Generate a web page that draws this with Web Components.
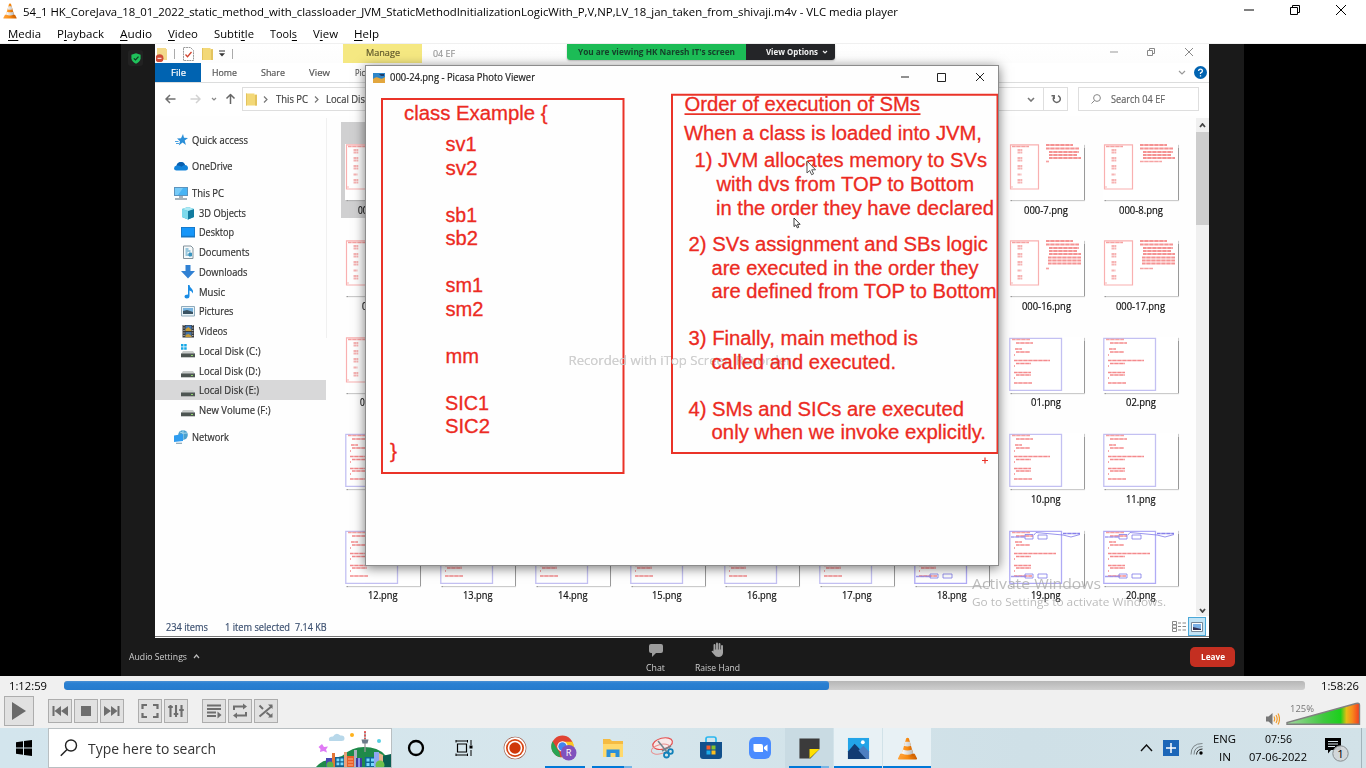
<!DOCTYPE html>
<html lang="en">
<head>
<meta charset="utf-8">
<title>VLC media player</title>
<style>
html,body{margin:0;padding:0;width:1366px;height:768px;overflow:hidden;background:#fff}
</style>
</head>
<body>
<desk-screen></desk-screen>
<script>
const T = (w, s, extra = '') => `<fit-text w="${w}" ${extra}>${s}</fit-text>`;
function define(name, css, html) {
  customElements.define(name, class extends HTMLElement {
    connectedCallback() {
      if (this.shadowRoot) return;
      const root = this.attachShadow({ mode: 'open' });
      root.innerHTML = `<style>*{box-sizing:border-box}svg{display:block;flex:none}${css}</style>` + (typeof html === 'function' ? html(this) : html);
    }
  });
}

/* Text squeezed or stretched to a set advance width */
customElements.define('fit-text', class extends HTMLElement {
  connectedCallback() {
    if (this.shadowRoot) return;
    const w = +this.getAttribute('w');
    const root = this.attachShadow({ mode: 'open' });
    root.innerHTML = `<style>:host{display:block;flex:none;white-space:pre;width:${w}px}span{display:inline-block;transform-origin:0 50%}</style><span><slot></slot></span>`;
    const span = root.querySelector('span');
    const real = span.getBoundingClientRect().width;
    if (real) span.style.transform = `scaleX(${w / real})`;
  }
});

/* ---------- shared drawings ---------- */
const cone = s => `<svg width="${s}" height="${s}" viewBox="0 0 24 24"><defs><linearGradient id="cg" x1="0" x2="1"><stop offset="0" stop-color="#ffa23a"/><stop offset=".5" stop-color="#f88a10"/><stop offset="1" stop-color="#c85a00"/></linearGradient><linearGradient id="cw" x1="0" x2="1"><stop offset="0" stop-color="#fff"/><stop offset="1" stop-color="#b9b9b9"/></linearGradient></defs><path d="M4.5 17.5h15L22 22.4q0 1-1 1H3q-1 0-1-1z" fill="url(#cg)"/><path d="M10.6 1.2Q12 .2 13.4 1.2L18.6 19.5Q12 23 5.4 19.5z" fill="url(#cg)"/><path d="M9.5 5h5l1.2 4.2q-3.7 1.6-7.4 0zM7.2 13q4.8 2 9.6 0l1.2 4.3q-6 2.6-12 0z" fill="url(#cw)"/></svg>`;
const folder = (w, h) => `<svg width="${w}" height="${h}" viewBox="0 0 11 13"><path d="M0 1h8.5v1.2H11V13H0z" fill="#f3d877"/><path d="M0 1h1v12H0zM9 2.2h2V13H9z" fill="#e3c35e"/></svg>`;
const chev = (w, h, c, sw = 1.2) => `<svg width="${w}" height="${h}" viewBox="0 0 ${w} ${h}"><path d="M1 1L${w / 2} ${h - 1}L${w - 1} 1" fill="none" stroke="${c}" stroke-width="${sw}"/></svg>`;
const winCtl = (kind, c, s) => {
  const p = { min: `M0 ${s / 2}H${s}`, max: `M.5 .5H${s - .5}V${s - .5}H.5z`, restore: `M.5 2.5H${s - 2.5}V${s - .5}H.5zM2.5 2.5V.5H${s - .5}V${s - 2.5}H${s - 2.5}`, close: `M0 0L${s} ${s}M${s} 0L0 ${s}` }[kind];
  return `<svg width="${s}" height="${s}" viewBox="0 0 ${s} ${s}"><path d="${p}" fill="none" stroke="${c}" stroke-width="1"/></svg>`;
};

/* ---------- VLC window ---------- */
define('vlc-title', `:host{display:flex;align-items:center;height:24px;padding:0 20px 0 2px;background:#fff;color:#000;font:11.6px/24px "Open Sans","Noto Sans",sans-serif}
.g{flex:1}.c{display:flex;gap:36px;padding-bottom:4px}.i{width:16px;margin-right:5px;padding-bottom:2px}`,
`<div class="i">${cone(16)}</div>${T(875, '54_1 HK_CoreJava_18_01_2022_static_method_with_classloader_JVM_StaticMethodInitializationLogicWith_P,V,NP,LV_18_jan_taken_from_shivaji.m4v - VLC media player')}<div class="g"></div><div class="c">${winCtl('min', '#000', 10)}${winCtl('restore', '#000', 10)}${winCtl('close', '#000', 10)}</div>`);

define('vlc-menu', `:host{display:flex;gap:16px;height:20px;padding-left:8px;background:#fff;border-bottom:1px solid #f0f0f0;color:#000;font:11.6px/20px "Open Sans","Noto Sans",sans-serif}u{text-underline-offset:2px;text-decoration-thickness:1px}`,
[[33, '<u>M</u>edia'], [47, 'P<u>l</u>ayback'], [32, '<u>A</u>udio'], [30, '<u>V</u>ideo'], [40, 'Subti<u>t</u>le'], [27, 'Tool<u>s</u>'], [25, 'V<u>i</u>ew'], [25, '<u>H</u>elp']].map(a => T(...a)).join(''));

/* ---------- Explorer ---------- */
define('explorer-ribbon', `:host{display:grid;grid-template-rows:19px 19px;height:39px;border-bottom:1px solid #dcdddd;background:#fff;color:#555;font:9.8px/17px "Open Sans","Noto Sans",sans-serif}
.r{display:flex;align-items:center}.q{width:188px;display:flex;align-items:center;padding-left:1px}.m{width:79px;height:19px;background:#f5e882;display:flex;justify-content:center;color:#60592c}
.bar{width:1px;height:10px;background:#aaa}.g{flex:1}.top{background:linear-gradient(#fff,#fdfdfd)}.w{display:flex;padding-bottom:3px}.file{width:46px;height:19px;background:#0063b1;color:#fff;display:flex;justify-content:center;line-height:19px}.r2{line-height:19px}`,
`<div class="r top"><div class="q"><svg width="12" height="16" viewBox="0 0 12 16"><path d="M1 2h9v1h1v11H1z" fill="#f3d98a"/><circle cx="3.5" cy="12.3" r="4" fill="#cf4a36"/><path d="M1.5 12.3h4" stroke="#fff"/></svg><div class="bar" style="margin:0 8px 0 6px"></div>
<svg width="11" height="14" viewBox="0 0 11 14"><path d="M.5.5h7l3 3v10H.5z" fill="#fff" stroke="#999" stroke-dasharray="2 .6"/><path d="M2.5 7.5l2 2.2L8.5 5" fill="none" stroke="#d0432e" stroke-width="1.3"/></svg><div style="margin-left:8px">${folder(11, 13)}</div><svg style="margin:0 7px 0 6px" width="6" height="7" viewBox="0 0 6 7"><path d="M0 1h6" stroke="#333"/><path d="M0 3.200h6L3 6.500z" fill="#333"/></svg><div class="bar"></div></div>
<div class="m">${T(34, 'Manage')}</div><div style="width:11px"></div>${T(22, '04 EF', 'style="color:#999"')}<div class="g"></div><div class="w">${winCtl('min', '#999', 8)}<div style="width:29px"></div>${winCtl('restore', '#888', 8)}<div style="width:30px"></div>${winCtl('close', '#888', 8)}</div><div style="width:16px"></div></div>
<div class="r r2"><div class="file">${T(15, 'File')}</div><div style="width:11px"></div>${T(25, 'Home')}<div style="width:24px"></div>${T(24, 'Share')}<div style="width:24px"></div>${T(21, 'View')}<div style="width:25px"></div>${T(10, 'Pic')}<div class="g"></div>${chev(8, 5, '#999')}<svg style="margin:0 2px 0 8px" width="13" height="13" viewBox="0 0 13 13"><circle cx="6.500" cy="6.500" r="6.500" fill="#0063b1"/><path d="M4.600 5Q4.700 3.200 6.500 3.200T8.400 4.900Q8.400 6 6.500 7v1M6.500 9.200v1.300" fill="none" stroke="#fff" stroke-width="1.300"/></svg></div>`);

define('explorer-address', `:host{display:flex;align-items:center;height:33px;background:#fff;color:#444;font:10px/22px "Open Sans","Noto Sans",sans-serif;padding-bottom:1px}
.nav{display:flex;align-items:center;width:87px;padding-left:10px}.box{width:826px;height:24px;border:1px solid #dedede;display:flex;align-items:center;padding-left:3px}.g{flex:1}.ref{border-left:1px solid #dedede;width:24px;height:22px;display:grid;place-items:center}
.s{margin-left:10px;width:121px;height:24px;border:1px solid #dedede;display:flex;align-items:center;padding-left:12px;color:#666}`,
(() => { const ar = (c, r = 0) => `<svg width="11" height="10" viewBox="0 0 11 10" style="transform:rotate(${r}deg)"><path d="M10.500 5H1M5 1L1 5l4 4" fill="none" stroke="${c}" stroke-width="1.500"/></svg>`;
  const gt = `<svg style="margin:0 7.500px 0 6px" width="5" height="7" viewBox="0 0 5 7"><path d="M1 .5L4 3.500L1 6.500" fill="none" stroke="#777" stroke-width="1.200"/></svg>`;
  return `<div class="nav">${ar('#707070')}<div style="width:14px"></div>${ar('#d2d2d2', 180)}<div style="width:10px"></div>${chev(6, 4, '#888')}<div style="width:8px"></div>${ar('#666', 90)}</div>
<div class="box">${folder(11, 14)}${gt}${T(32, 'This PC')}${gt}${T(39, 'Local Dis')}<div class="g"></div>${chev(8, 5, '#777', 1.600)}<div style="width:8px"></div><div class="ref"><svg width="10" height="10" viewBox="0 0 10 10"><path d="M6.500 1.600A3.500 3.500 0 1 1 3 2.200M2.700 5V1.800H0" transform="translate(.500 0)" fill="none" stroke="#666" stroke-width="1.500"/></svg></div></div>
<div class="s"><svg width="10" height="10" viewBox="0 0 10 10"><circle cx="6" cy="4" r="3.400" fill="none" stroke="#888"/><path d="M3.500 6.500L.5 9.500" stroke="#888"/></svg><div style="width:10px"></div>${T(54, 'Search 04 EF')}</div>`; })());

const disk = w => `<path d="M2 7h10l2 3H0z" fill="#c9cccb"/><path d="M0 9.500h14v3.800H0z" fill="#4d5552"/><path d="M10 11.500h2" stroke="#8fd36b"/>${w ? '<path d="M0 0h2.500v2.500H0zM3.200 0h2.500v2.500H3.200zM0 3.200h2.500v2.500H0zM3.200 3.200h2.500v2.500H3.200z" fill="#17a8e6"/>' : ''}`;
const navIcons = {
  star: '<path d="M9 1l1 3.700 4 .3-3.300 2.600 1.200 4.300L8.600 9.500l-3.800 3L6 8.200 3 5.500l4-.3z" fill="#2b8fd8"/><path d="M1 8.500h3.500M2 10.500h3" stroke="#4ba3e2"/>',
  cloud: '<path d="M0 9.500Q0 7 2.500 6.500Q3.500 3 7 3q3 0 4 3 3 .3 3 3.200 0 2.300-2.500 2.300h-9Q0 11.500 0 9.500z" fill="#1283da"/><path d="M2.500 6.500Q3.500 3 7 3q3 0 4 3-2 0-3.500 1.800Q5 6 2.500 6.500z" fill="#0a5fae"/>',
  pc: '<path d="M0 1h14v9H0z" fill="#5c93bd"/><path d="M1 2h12v7H1z" fill="#48b4f4"/><path d="M1 2h8L4 9H1z" fill="#77cbf8"/><path d="M5 11h4M1 13h12" stroke="#8b9aa5" stroke-width="1.300"/>',
  cube: '<path d="M1 3l6-2 6 2v8l-6 2.500L1 11z" fill="#23a6c9"/><path d="M1 3l6 2v8.500L1 11z" fill="#7ddaec"/><path d="M7 5l6-2v8l-6 2.500z" fill="#117b9f"/><path d="M1 3l6-2 6 2-6 2z" fill="#aeeaf4"/>',
  desk: '<path d="M0 2h14v10.500H0z" fill="#1876c2"/><path d="M.8 2.800h12.400v8H.8z" fill="#1696f9"/>',
  doc: '<path d="M2.500 1h7.500l2 2v10.500H2.500z" fill="#f6f9fa" stroke="#83939c"/><path d="M4.500 4h3M4.500 6h5M4.500 8h2M4.500 10h6M8 8h2.500v3H8z" stroke="#3b94bf" fill="#3b94bf"/>',
  down: '<path d="M4.500 0h5v6H14l-7 7.500L0 6h4.500z" fill="#3181d3"/>',
  music: '<path d="M7 0h1.500q.3 2.500 2.500 4 1.700 1.500.8 4.500Q11 6 8.500 5.500V11q0 2.500-2.700 2.500-2.300 0-2.300-1.800Q3.500 9.500 7 9.500z" fill="#1a8ce4"/>',
  pics: '<path d="M.5 2.500h13v9.500H.5z" fill="#e8f3f8" stroke="#8faabb"/><path d="M2 4h10v6H2z" fill="#77b3df"/><path d="M2 10V7l4-1 6 2v2z" fill="#3a5363"/>',
  vids: '<path d="M1.500 1h11.500v12.500H1.500z" fill="#3a3a3a"/><path d="M4.500 1.500h6v5.500h-6z" fill="#3f78ba"/><path d="M4.500 8h6v5h-6z" fill="#4573a4"/><path d="M4.500 5l3-2 3 3v1h-6zM4.500 11l3-1 3 2v1h-6z" fill="#c69a34"/><path d="M3 1v12.500M11.800 1v12.500" stroke="#ddd" stroke-dasharray="1 1.500"/>',
  net: '<circle cx="9" cy="5" r="4.800" fill="#4ba0cd"/><path d="M6 2q3 2 7 1M9 0v9" stroke="#a6daf0" fill="none"/><path d="M0 5.500L9 4v7L0 12z" fill="#2f9df0"/><path d="M2 13.300h6" stroke="#8aa6b6" stroke-width="1.200"/>',
  diskw: disk(1), disk: disk(0)
};
define('nav-item', `:host{display:flex;align-items:center;gap:4px;height:19.750px;padding-left:26px;width:171px}:host([top]){padding-left:19px}:host([gap]){margin-top:6.700px}:host([on]){background:#d8d8d9}`,
el => `<svg width="14" height="14" viewBox="0 0 14 14">${navIcons[el.getAttribute('icon')]}</svg>${T(el.getAttribute('w'), el.getAttribute('label'))}`);

define('explorer-nav', `:host{display:block;width:172px;padding-top:14.100px;color:#333;font:10px/18px "Open Sans","Noto Sans",sans-serif;background:linear-gradient(#f0f0f0,#f0f0f0) right 2px/1px 220px no-repeat}`,
[['star', 56, 'Quick access', 'top'], ['cloud', 40.5, 'OneDrive', 'top gap'], ['pc', 32, 'This PC', 'top gap'], ['cube', 47, '3D Objects'], ['desk', 35, 'Desktop'], ['doc', 50.5, 'Documents'], ['down', 48.5, 'Downloads'], ['music', 26, 'Music'], ['pics', 34.5, 'Pictures'], ['vids', 28.5, 'Videos'], ['diskw', 61.5, 'Local Disk (C:)'], ['disk', 61.5, 'Local Disk (D:)'], ['disk', 60, 'Local Disk (E:)', 'on'], ['disk', 71.5, 'New Volume (F:)'], ['net', 37, 'Network', 'top gap']]
.map(([i, w, l, a = '']) => `<nav-item icon="${i}" w="${w}" label="${l}" ${a}></nav-item>`).join(''));

/* Thumbnail of a slide: kinds a0..a4 are two-column notes, b is code, c is annotated code */
function slide(kind) {
  const dash = (x, y, w, c = '#f58b8b', o = .8, h = 1.7) => `<path d="M${x} ${y}h${w}" stroke="${c}" stroke-width="${h}" stroke-dasharray="3 .3 1.500 .2" opacity="${o}"/>`;
  let s = '';
  if (kind[0] === 'a') {
    s += '<path d="M1.500 .8h28v44.200h-28z" fill="none" stroke="#f9b0b0" stroke-width="1.200"/>' + dash(3, 2.5, 17);
    [6, 8.5, 14, 16.5, 22, 24.500, 30.500, 36, 38.500].forEach(y => { s += dash(8.5, y, y === 30.500 ? 4 : 5, '#f39a9a', .75, 2); });
    s += dash(2.5, 43, 1);
    if (kind !== 'a0') {
      [[1, 27], [4.500, 33], [8, 33], [11, 31], [14, 35]].forEach(([y, w], i) => { s += dash(i < 2 ? 37 : 40, y, i < 2 ? w : w - 3, '#f27070', .75, 2); });
      if (kind === 'a1') s += dash(37, 17.500, 3);
      if (kind === 'a2') s += dash(37, 17.500, 22);
      if (kind === 'a3' || kind === 'a4') { [17.500, 20.500, 23.500].forEach(y => { s += dash(39, y, 33, '#f27070', .75, 2); }); s += dash(37, 28.500, kind === 'a3' ? 3 : 13); }
    }
  } else {
    s += `<path d="M.8 1.300h51.700v52H.8z" fill="none" stroke="${kind === 'c' ? '#b0abf5' : '#c3c0f2'}" stroke-width="1.300"/>` + dash(3, 2.5, 18);
    [[6, 7, 17], [12, 6, 7], [15, 7, 14], [18, 5, 1], [23.500, 5, kind === 'c' ? 42 : 36], [26.500, 7, 15], [29, 5, 1], [35.500, 5, 17], [38, 7, 15], [41, 5, 1], [46, 5, 18]].forEach(([y, x, w]) => { s += dash(x, y, w, '#f26d70'); });
    if (kind === 'c') s += dash(2, 7, 14, '#8e86ed') + '<path d="M16 4.500h8v4.500h-8zM29 5h9v4h-9zM16 44h8v4h-8zM29 44h9v4h-9zM25 5L27 2.500 54 5 62 7l9-2.500" fill="none" stroke="#7f78e9" stroke-width=".8"/>' + dash(54, 3.500, 17, '#6a61e6') + dash(2, 46.500, 15, '#8e86ed');
  }
  return `<svg width="75" height="56" viewBox="0 0 75 56">${s}</svg>`;
}
define('file-tile', `:host{display:flex;flex-direction:column;align-items:center;width:94.800px;height:96.500px}.t{width:75px;height:56px;background:#fff;box-shadow:.5px 1px 1px #999}.l{height:18px;margin-top:.500px;display:flex;justify-content:center}:host([cut]) .l{width:94.800px;justify-content:flex-start}`,
el => { const x = el.getAttribute('cut'); return `<div class="t">${slide(el.getAttribute('kind'))}</div><div class="l"${x ? ` style="padding-left:${x}px"` : ''}>${el.getAttribute('label') ? T(el.getAttribute('w'), el.getAttribute('label')) : ''}</div>`; });

define('explorer-files', `:host{display:grid;grid-template-columns:repeat(9,94.750px);grid-auto-rows:96.400px;padding:28px 0 0 8.500px;height:501px;width:869px;overflow:hidden;color:#111;font:10px/18px "Open Sans","Noto Sans",sans-serif;background:linear-gradient(#d0d0d1,#d0d0d1) 13.500px 6px/88px 96px no-repeat}`,
(() => {
  const t = (r, c, kind, w = '', label = '', cut = '') => `<file-tile style="grid-area:${r}/${c}" kind="${kind}" w="${w}" label="${label}" ${cut ? `cut="${cut}"` : ''}></file-tile>`;
  let s = t(1, 1, 'a0', 9.5, '00', 22) + t(2, 1, 'a0', 5, '0', 26.5) + t(3, 1, 'a0', 9.5, '00', 24) + t(4, 1, 'b');
  s += t(1, 8, 'a1', 44, '000-7.png') + t(1, 9, 'a2', 44, '000-8.png') + t(2, 8, 'a3', 49, '000-16.png') + t(2, 9, 'a4', 49, '000-17.png') + t(3, 8, 'b', 30, '01.png') + t(3, 9, 'b', 30, '02.png') + t(4, 8, 'b', 29.5, '10.png') + t(4, 9, 'b', 29.5, '11.png');
  for (let i = 0; i < 9; i++) s += t(5, i + 1, i > 5 ? 'c' : 'b', 29.5, `${12 + i}.png`);
  return s;
})());

define('explorer-scroll', `:host{display:flex;flex-direction:column;justify-content:space-between;align-items:center;width:13px;height:498px;margin-top:2px;background:#f0f0f0;padding:5px 0 3px}.th{width:13px;height:93px;background:#cdcdcd;margin-top:4px}.up{transform:rotate(180deg)}.a{display:flex;flex-direction:column;align-items:center}`,
`<div class="a"><div class="up">${chev(7, 5, '#444', 1.800)}</div><div class="th"></div></div>${chev(7, 5, '#444', 1.800)}`);

define('explorer-status', `:host{display:flex;align-items:center;height:20px;padding-left:11px;color:#3c5070;font:10px/20px "Open Sans","Noto Sans",sans-serif;border-bottom:1px solid #777}.g{flex:1}.v{width:18px;height:19px;background:#c2e4f6;border:1px solid #4aa8d8;display:grid;place-items:center;margin:0 3px 0 2px}`,
`${T(42, '234 items')}<div style="width:17px"></div>${T(65, '1 item selected')}<div style="width:5px"></div>${T(31.5, '7.14 KB')}<div class="g"></div><svg width="14" height="11" viewBox="0 0 14 11"><path d="M.5.5h4v3h-4zM.5 4h4v3h-4zM.5 7.500h4v3h-4zM6 2h3M10.500 2H14M6 5.500h3M10.500 5.500H14M6 9h3M10.500 9H14" fill="none" stroke="#888"/></svg><div class="v"><svg width="12" height="10" viewBox="0 0 12 10"><path d="M.5.5h11v9H.5z" fill="#fff" stroke="#789"/><path d="M2 2h8v6H2z" fill="#7bb0e6"/><path d="M2 8V5l4 1 4 1v1z" fill="#335"/></svg></div>`);

define('file-explorer', `:host{display:block;width:1054px;height:594px;background:#fefefe;overflow:hidden;-webkit-text-stroke:.2px}.b{display:flex;height:501px}`,
`<explorer-ribbon></explorer-ribbon><explorer-address></explorer-address><div class="b"><explorer-nav></explorer-nav><explorer-files></explorer-files><explorer-scroll></explorer-scroll></div><explorer-status></explorer-status>`);

/* ---------- Photo viewer window ---------- */
define('slide-canvas', `:host{display:block}svg text{font-family:"Liberation Sans",Arial,sans-serif;font-size:20px;fill:#ec2a22;stroke:#ec2a22;stroke-width:.3px}`,
(() => {
  const l = [[404, 547.5, 119.5, 'class Example {'], [445.5, 476.5, 151, 'sv1'], [445.5, 477.5, 175, 'sv2'], [445.5, 477, 221.700, 'sb1'], [445.5, 478, 245, 'sb2'], [445.5, 483, 292, 'sm1'], [445.5, 483.5, 316, 'sm2'], [445.5, 479, 363, 'mm'], [445, 489, 409.700, 'SIC1'], [445, 490, 433, 'SIC2'], [390, 397, 458, '}'],
  [684.5, 920, 110.700, 'Order of execution of SMs'], [684, 982, 140.300, 'When a class is loaded into JVM,'], [694.5, 987, 167, '1) JVM allocates memory to SVs'], [716.5, 974, 190.700, 'with dvs from TOP to Bottom'], [716, 994, 214.5, 'in the order they have declared'], [688.5, 988, 251, '2) SVs assignment and SBs logic'], [711.5, 978.5, 274.5, 'are executed in the order they'], [711.5, 996.5, 298, 'are defined from TOP to Bottom'], [688.5, 918, 345, '3) Finally, main method is'], [711.5, 896, 368.5, 'called and executed.'], [688.5, 964, 415.5, '4) SMs and SICs are executed'], [711.5, 986, 439, 'only when we invoke explicitly.']];
  const cur = 'M0 0v12l2.700-2.500 1.900 4.200 2-.9-1.900-4H8.500z';
  return `<svg width="632" height="475" viewBox="366 89 632 475"><path d="M382 99h241.500v374H382zM672 94.800h325.500V453H672z" fill="none" stroke="#ea3328" stroke-width="2"/><path d="M684.500 114.200H920.500" stroke="#ea3328" stroke-width="1.700"/>
<text x="568.500" y="365.300" textLength="223" lengthAdjust="spacingAndGlyphs" style="font:12.5px 'Open Sans','Noto Sans',sans-serif;fill:#d0d0d0;stroke:none;filter:drop-shadow(.6px .8px 0 #aaa8)">Recorded with iTop Screen Recorder</text>
${l.map(([a, b, y, s]) => `<text x="${a}" y="${y}" textLength="${b - a}" lengthAdjust="spacingAndGlyphs">${s}</text>`).join('')}
<path d="M982 460.500h6M985 457.500v6" stroke="#ea3328" stroke-width="1.200"/><path d="${cur}" transform="translate(807 161)" fill="#fff" stroke="#555"/><path d="${cur}" transform="translate(794 218) scale(.72)" fill="#fff" stroke="#222" stroke-width="1.200"/></svg>`;
})());
define('photo-window', `:host{display:block;width:634px;height:501px;border:1px solid #8c8c8c;background:#fefefe;box-shadow:0 2px 11px #0008;overflow:hidden}.t{height:23px;display:flex;align-items:center;padding-left:7px;font:10.200px/23px "Open Sans","Noto Sans",sans-serif;color:#222;-webkit-text-stroke:.2px}.g{flex:1}.w{display:flex;align-items:center;padding-bottom:1px}`,
`<div class="t"><svg width="12" height="10" viewBox="0 0 12 10"><path d="M0 0h12v10H0z" fill="#2e86c9"/><path d="M0 6q3-3 6-1t6-1v6H0z" fill="#e2a63e"/><path d="M6 1h5v2H8z" fill="#1d3e6b"/></svg><div style="width:5px"></div>${T(145, '000-24.png - Picasa Photo Viewer')}<div class="g"></div><div class="w">${winCtl('min', '#222', 8)}<div style="width:28px"></div>${winCtl('max', '#222', 9)}<div style="width:30px"></div>${winCtl('close', '#222', 8)}</div><div style="width:14px"></div></div><slide-canvas></slide-canvas>`);

/* ---------- Meeting chrome ---------- */
define('share-banner', `:host{display:flex;width:268px;height:16px;border-radius:0 0 3px 3px;overflow:hidden;font:bold 8.800px/16px "Open Sans","Noto Sans",sans-serif;box-shadow:0 1px 2px #0004}.a{width:179px;background:#1cbc56;color:#15402a;padding-left:11px}.b{flex:1;background:#242528;color:#f2f2f2;display:flex;align-items:center;padding-left:20px;gap:4px}`,
`<div class="a">${T(157, "You are viewing HK Naresh IT's screen")}</div><div class="b">${T(52, 'View Options')}${chev(6, 4, '#eee')}</div>`);

define('meeting-bar', `:host{display:flex;align-items:center;height:39px;color:#cfcfcf;font:9.300px/13px "Open Sans","Noto Sans",sans-serif;padding:0 9px 0 8px}.it{display:flex;flex-direction:column;align-items:center;gap:3px;height:30px}.up{transform:rotate(180deg)}.leave{width:45px;height:20px;border-radius:5px;background:#c42f21;color:#fff;font-weight:bold;line-height:19px;display:flex;justify-content:center}.g{flex:1}`,
`${T(58, 'Audio Settings')}<div style="width:6px"></div><div class="up">${chev(7, 5, '#bbb')}</div><div style="width:446px"></div>
<div class="it"><svg width="16" height="16" viewBox="0 0 16 16"><path d="M3 2h10q2 0 2 2v5q0 2-2 2H8l-4 4v-4H3q-2 0-2-2V4q0-2 2-2z" fill="#9c9c9c"/></svg>${T(19, 'Chat')}</div><div style="width:30px"></div>
<div class="it"><svg width="16" height="16" viewBox="0 0 16 16"><path d="M4.500 3v6M7 1.500V8M9.500 2v6M12 4v5" stroke="#a4a4a4" stroke-width="1.900" stroke-linecap="round"/><path d="M3.600 7.500H13V11q-.5 4-4.500 4-3 0-4.500-2.500L1.500 9.500q.8-1.300 2.300 0z" fill="#a4a4a4"/></svg>${T(45, 'Raise Hand')}</div><div class="g"></div><div class="leave">${T(24, 'Leave')}</div>`);

define('video-stage', `:host{display:flex;justify-content:center;height:632px;background:#000;padding-right:1px}.z{position:relative;width:1123px;height:632px;background:#1a1a1a}.sh{padding-left:34px;height:593px;display:flex}
.shield{position:absolute;left:7px;top:6px;width:15px;height:16px;border-radius:3px;background:#222;display:grid;place-items:center}
photo-window{position:absolute;left:244px;top:21px}share-banner{position:absolute;left:446px;top:0}.act{position:absolute;left:851px;top:529px;color:#a3a3a3;opacity:.72;font:14.700px/20px "Open Sans","Noto Sans",sans-serif}.act .x{font-size:11.500px;line-height:17px}`,
`<div class="z"><div class="sh"><file-explorer></file-explorer></div><meeting-bar></meeting-bar><div class="shield"><svg width="10" height="11" viewBox="0 0 10 11"><path d="M5 .3l4.600 1.500v3.700Q9 9 5 10.800 1 9 .4 5.500V1.800z" fill="#1fc25b"/><path d="M2.800 5.300l1.700 1.700 3-3.300" fill="none" stroke="#0f3a20" stroke-width="1.200"/></svg></div><photo-window></photo-window><share-banner></share-banner><div class="act">${T(129, 'Activate Windows')}<div class="x">${T(194, 'Go to Settings to activate Windows.')}</div></div></div>`);

/* ---------- Playback controls ---------- */
define('ctl-button', `:host{display:grid;place-items:center;width:24px;height:24px;background:#e1e1e1;border:1px solid #adadad;box-sizing:border-box}:host([big]){width:30px;height:30px}`, '<slot></slot>');
define('seek-bar', `:host{display:flex;align-items:center;height:19px;padding:0 7px 0 9px;color:#000;font:11px/19px "Open Sans","Noto Sans",sans-serif}.tr{width:1241px;height:9px;border-radius:3px;background:linear-gradient(#b6b6b6,#cfcfcf);margin:0 16px 1px 17px;overflow:hidden}.f{width:765px;height:9px;border-radius:3px;background:linear-gradient(#4a90d4,#2a80d2 25%,#267bcd)}`,
`${T(38, '1:12:59')}<div class="tr"><div class="f"></div></div>${T(38, '1:58:26')}`);
define('vlc-controls', `:host{display:block;height:52px;background:#f0f0f0}.r{display:flex;align-items:center;height:32px;padding-left:4px}.g{flex:1}.p{width:14px}.s{width:2px}.vol{display:flex;align-items:flex-end;height:30px;width:102px;position:relative}.pc{position:absolute;left:26px;top:6px;color:#777;font:9.500px/14px "Open Sans","Noto Sans",sans-serif}`,
(() => { const b = (p) => `<ctl-button><svg width="18" height="16" viewBox="0 0 18 16" fill="#6e6e6e" stroke="#6e6e6e" stroke-width="0">${p}</svg></ctl-button>`, s = '<div class="s"></div>', g = '<div class="p"></div>';
  return `<seek-bar></seek-bar><div class="r"><ctl-button big><svg width="14" height="18" viewBox="0 0 14 18"><path d="M0 0L14 9L0 18z" fill="#6a6a6a"/></svg></ctl-button>${g}
${b('<path d="M1.500 3h2v10h-2zM10 3v10L3.500 8zM17 3v10L10 8z"/>')}${s}${b('<path d="M4 3h10v10H4z"/>')}${s}${b('<path d="M14.500 3h2v10h-2zM1 3v10L8 8zM8 3v10L14.500 8z"/>')}${g}
${b('<path d="M1.500 6V2H6M12 2h4.500v4M16.500 10v4H12M6 14H1.500v-4" fill="none" stroke-width="2.200"/>')}${s}${b('<path d="M3.500 2v12M9 2v12M14.500 2v12M1.200 4h4.600M6.700 11h4.600M12.200 7h4.600" fill="none" stroke-width="2.100"/>')}${g}
${b('<path d="M2 2.500h14M2 6h14M2 9.500h9M2 13h9" fill="none" stroke-width="2"/><path d="M12.500 8.500v7l4-3.500z"/>')}${s}${b('<path d="M3 7V3.500h10M15 9v3.500H5" fill="none" stroke-width="2"/><path d="M12 .5v6l4-3zM6 9.500v6l-4-3z"/>')}${s}${b('<path d="M2.500 2.500l3.500 3.500M9.500 9.500l5 4M2.500 13.500L15 3" fill="none" stroke-width="2"/><path d="M11 1.500h4.500V6zM11 14.500h4.500V10z"/>')}
<div class="g"></div><div class="vol"><svg style="margin:0 6px 0 2px" width="14" height="14" viewBox="0 0 14 14"><path d="M0 4.500h2.500L6.500 1v12L2.500 9.500H0z" fill="#777"/><path d="M8 4.500q1.300 2.500 0 5M10 3q2.400 4 0 8M12 1.500q3 5.500 0 11" fill="none" stroke="#f29b28" stroke-width="1.200"/></svg>
<svg width="75" height="24" viewBox="0 0 75 24"><defs><linearGradient id="v"><stop offset="0" stop-color="#a4d6a1"/><stop offset=".5" stop-color="#40c840"/><stop offset=".74" stop-color="#1cd01c"/><stop offset=".82" stop-color="#e5bd16"/><stop offset=".9" stop-color="#f78a1c"/><stop offset="1" stop-color="#f43a20"/></linearGradient></defs><path d="M1 22.300V20.500L70 1.500q3.500-1 3.500 1.500V22.300z" fill="url(#v)" stroke="#808080" stroke-width="1.400"/></svg><div class="pc">${T(24, '125%')}</div></div></div>`; })());

/* ---------- Taskbar ---------- */
define('search-box', `:host{display:flex;align-items:center;box-sizing:border-box;width:344px;height:40px;background:#fff;border:1px solid #b9bfc2;padding-left:11px;color:#333;font:14.600px/38px "Open Sans","Noto Sans",sans-serif}.g{flex:1}`,
`<svg width="18" height="18" viewBox="0 0 18 18"><circle cx="11" cy="6.500" r="5.500" fill="none" stroke="#222" stroke-width="1.400"/><path d="M7 10.500L.8 16.700" stroke="#222" stroke-width="1.500"/></svg><div style="width:10px"></div>${T(128, 'Type here to search')}<div class="g"></div>
<svg width="76" height="38" viewBox="0 0 76 38"><path d="M1 38q5-6 12-7l14-4q10-9 22-9 14 0 21 8l7 3v9z" fill="#1f8a4a"/><path d="M58 38q4-11 18-13v13z" fill="#0a5f51"/><path d="M14 11.500q-1-4 4-4 3-5 7.500-1 4-.5 4 3 0 2.500-3 2.500H16q-2 0-2-.5z" fill="#b8d8ea"/><circle cx="37" cy="6" r="2" fill="#ffb21c"/><circle cx="64" cy="12" r="2" fill="#58cfe2"/><path d="M7 15l2 3 4-.5-2 3 1 3-3.500-1.500L5 23l.5-3-2-2z" fill="#e07af5"/><path d="M50 3v20" stroke="#999" stroke-width="1.300"/><path d="M50 2v8" stroke="#e33c3c" stroke-width="1.500" stroke-dasharray="2 1.500"/><path d="M46.500 10.500h7l-1 4h-5z" fill="#6c7b8a"/>
<path d="M11 29h6v9h-6z" fill="#4746b4"/><path d="M17 24h3v14h-3z" fill="#e37636"/><path d="M20 28h9v10h-9z" fill="#12608c"/><path d="M21.500 29.500h2.800v2.800h-2.800zM25.500 29.500h2.800v2.800h-2.800zM21.500 33.500h2.800v2.800h-2.800zM25.500 33.500h2.800v2.800h-2.800z" fill="#7adcff"/><path d="M29 23h3v15h-3z" fill="#e7a17c"/><path d="M32 27h7v11h-7z" fill="#e85e29"/><path d="M33 30h5M33 33h5M33 36h5" stroke="#ffb184"/><path d="M39 21h3v17h-3z" fill="#aab0be"/><path d="M41 29h6v9h-6z" fill="#403aa2"/><path d="M43 29h2v9h-2z" fill="#8892ee"/><path d="M50 28h10v10H50z" fill="#0e6796"/><path d="M51.500 29.500h3v3h-3zM56 29.500h3v3h-3zM51.500 34h3v3h-3zM56 34h3v3h-3z" fill="#77daff"/><path d="M59 23h5v15h-5z" fill="#8fa8f2"/><path d="M64 24l4 2v12h-4z" fill="#e8b28a"/><circle cx="15" cy="36" r="3.500" fill="#56b34c"/><circle cx="65" cy="36" r="4.500" fill="#6dc04b"/></svg>`);

define('task-icon', `:host{display:grid;place-items:center;width:48px;height:40px;margin-right:1px;background:linear-gradient(#0078d7,#0078d7) var(--bx,4px) 38px/var(--bw,0) 2px no-repeat,linear-gradient(#76b5e6,#76b5e6) 36px 38px/var(--ex,0) 2px no-repeat,var(--bg,transparent)}`, '<slot></slot>');

define('task-bar', `:host{display:flex;height:40px;background:linear-gradient(90deg,#d3e5ed,#d6e6ec 45%,#cfe0e7 75%,#d2e2e8);color:#111}.start{width:48px;display:grid;place-items:center}.g{flex:1}.tray{display:flex;align-items:center;font:11.500px/18px "Open Sans","Noto Sans",sans-serif;color:#000}.two{display:flex;flex-direction:column;align-items:center;padding-bottom:1px}.up{transform:rotate(180deg)}.end{width:1px;height:40px;background:#a4b4bb;margin:0 4px 0 12px}`,
(() => { const ti = (style, svg, s = 24, vb = 24) => `<task-icon style="${style}"><svg width="${s}" height="${s}" viewBox="0 0 ${vb} ${vb}">${svg}</svg></task-icon>`;
return `<div class="start"><svg width="16" height="16" viewBox="0 0 16 16"><path d="M0 2.300L7 1.300v6.200H0zM8 1.100L16 0v7.500H8zM0 8.500h7v6.200L0 13.700zM8 8.500h8V16l-8-1.100z" fill="#000"/></svg></div><search-box></search-box>
${ti('', '<circle cx="12" cy="12" r="7" fill="none" stroke="#000" stroke-width="2.300"/>')}
${ti('', '<path d="M4.500 8h9v8h-9zM3 5h11.500M3 19h11.500" fill="none" stroke="#000" stroke-width="1.200"/><path d="M3 4v2.500M14.500 4v2.500M3 17.500V20M14.500 17.500V20M18 4v5M18 14v6" stroke="#000"/><path d="M16.500 9.500h3v3h-3z" fill="#000"/>')}
${ti('width:50px', '<circle cx="12" cy="12" r="11.300" fill="#9a4a34"/><circle cx="12" cy="12" r="10.700" fill="#fff"/><circle cx="12" cy="12" r="9" fill="#d84512"/><circle cx="12" cy="12" r="7.300" fill="#fff"/><circle cx="12" cy="12" r="5.700" fill="#cf3708"/>')}
${ti('--bw:40px;width:46px', '<circle cx="11" cy="11" r="10.500" fill="#e04433"/><path d="M1.500 6L8 16.500 9 21.400A10.500 10.500 0 0 1 1.500 6z" fill="#28a453"/><path d="M11 6.500h9.800A10.500 10.500 0 0 1 10 21.400l6-8z" fill="#fcc822"/><circle cx="11" cy="11" r="5" fill="#fff"/><circle cx="11" cy="11" r="4" fill="#4285f0"/><circle cx="17" cy="17" r="7.500" fill="#8052bd"/><text x="17" y="20.300" text-anchor="middle" font-family="Open Sans,Noto Sans,sans-serif" font-size="9" fill="#fff">R</text>', 26, 25)}
${ti('--bw:32px;--ex:8px;width:49px', '<path d="M2 3h7l2 2h11v16H2z" fill="#f5bb42"/><path d="M2 8h20v13H2z" fill="#ffd96c"/><path d="M5.500 13.500h13V21h-4v-4h-5v4h-4z" fill="#2a8fd9"/>')}
${ti('', '<ellipse cx="12.500" cy="7.500" rx="10" ry="5.500" fill="#f7e9e9" stroke="#e55050" stroke-width="1.200" transform="rotate(-14 13 7)"/><ellipse cx="10.500" cy="13" rx="9.500" ry="4.600" fill="none" stroke="#e89090" transform="rotate(-14 11 13)"/><path d="M8 5l9 11M12 15l9-5" stroke="#75848d" stroke-width="1.500"/><circle cx="16.500" cy="19" r="2.500" fill="none" stroke="#1281b9" stroke-width="1.800"/><circle cx="20.500" cy="15.500" r="2.300" fill="none" stroke="#1281b9" stroke-width="1.800"/>')}
${ti('', '<path d="M7 7V3q0-2 2-2h6q2 0 2 2v4" fill="none" stroke="#2bb7ef" stroke-width="1.700"/><path d="M1 6h22v14q0 3-3 3H4q-3 0-3-3z" fill="#12508c"/><path d="M7.500 9.500h4v4h-4z" fill="#f35b2b"/><path d="M12.500 9.500h4v4h-4z" fill="#88c12c"/><path d="M7.500 14.500h4v4h-4z" fill="#1cabe9"/><path d="M12.500 14.500h4v4h-4z" fill="#fcbf20"/>')}
${ti('', '<rect x="1" y="1" width="22" height="22" rx="6" fill="#4a8cff"/><path d="M5.500 8h7.500q2 0 2 2v6H7.500q-2 0-2-2zM16 11l3.500-2.500v7L16 13z" fill="#fff"/>')}
${ti('--bw:32px;--ex:8px;--bg:#c9dbe3', '<path d="M1.500 1.500h21v11L13 22.500H1.500z" fill="#3b3b3b"/><path d="M12 12.500h10.500L12 22.500z" fill="#ffe000"/>', 23)}
${ti('--bx:0px;--bw:48px;--bg:#e8f1f5', '<path d="M1 1h22v22H1z" fill="#22a4e8"/><path d="M1 15L8 7l15 16H1z" fill="#123c73"/><path d="M12 14l5-5 6 6v8h-3z" fill="#4d7fc1"/><circle cx="16.500" cy="5.500" r="2" fill="#fff"/>', 23)}
<task-icon style="--bx:0px;--bw:48px;--bg:#e8f1f5">${cone(23)}</task-icon>
<div class="g"></div><div class="tray"><div class="up">${chev(13, 8, '#111', 1.400)}</div><svg style="margin:0 11px 0 10px" width="16" height="16" viewBox="0 0 16 16"><path d="M0 0h16v16H0z" fill="#1c66b8"/><path d="M8 3v10M3 8h10" stroke="#fff" stroke-width="1.500"/></svg>
<svg width="13" height="13" viewBox="0 0 13 13" fill="none"><path d="M1 12.500Q1 1.500 12.500 1.500M4 12.500Q4 4.500 12.500 4.500" stroke="#7b8589"/><path d="M6.500 12.500Q7 7.300 12.500 7" stroke="#222"/><circle cx="11" cy="11" r="1.700" fill="#000"/></svg><div style="width:10px"></div>
<div class="two">${T(23, 'ENG')}${T(12, 'IN')}</div><div style="width:13px"></div><div class="two">${T(27, '07:56')}${T(58, '07-06-2022')}</div><svg style="margin:3px 0 0 17px" width="25" height="26" viewBox="0 0 25 26"><path d="M1 1h16v12H7l-3 3.500V13H1z" fill="#000"/><path d="M4 4.500h10M4 7h10M4 9.500h7" stroke="#d6e4ea"/><circle cx="16.500" cy="16.500" r="7.700" fill="#d2d6d8" stroke="#888e91" fill-opacity=".93"/><text x="16.500" y="20.500" text-anchor="middle" font-family="Open Sans,Noto Sans,sans-serif" font-size="11.500" fill="#000">1</text></svg><div class="end"></div></div>`; })());

define('desk-screen', `:host{display:grid;grid-template-rows:24px 20px 632px 52px 40px;width:1366px;height:768px;overflow:hidden}`,
`<vlc-title></vlc-title><vlc-menu></vlc-menu><video-stage></video-stage><vlc-controls></vlc-controls><task-bar></task-bar>`);
</script>
</body>
</html>
